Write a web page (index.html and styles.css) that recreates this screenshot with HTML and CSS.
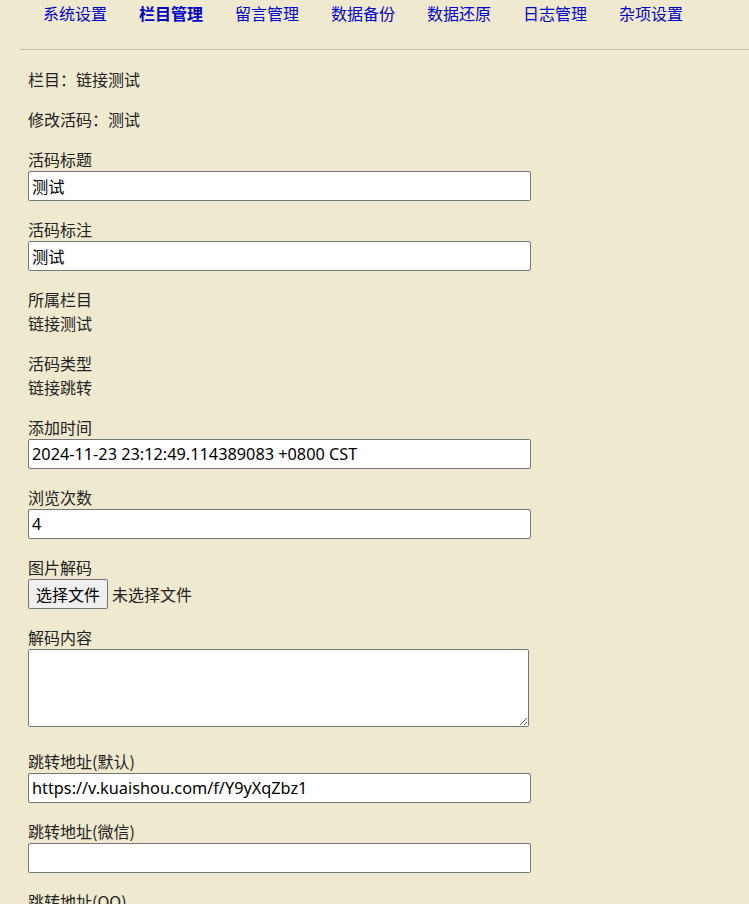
FILE: index.html
```html
<!DOCTYPE html>
<html lang="zh-CN">
<head>
  <meta charset="UTF-8" />
  <title>栏目管理 - 修改活码</title>
  <link rel="stylesheet" href="styles.css">
</head>
<body>

<nav class="topnav">
  <a href="#">系统设置</a>
  <a href="#" class="active">栏目管理</a>
  <a href="#">留言管理</a>
  <a href="#">数据备份</a>
  <a href="#">数据还原</a>
  <a href="#">日志管理</a>
  <a href="#">杂项设置</a>
</nav>
<hr class="divider">

<main class="content">
  <p class="info">栏目：链接测试</p>
  <p class="info">修改活码：测试</p>

  <form class="edit-form">
    <div class="field">
      <label>活码标题</label>
      <input type="text" value="测试">
    </div>
    <div class="field">
      <label>活码标注</label>
      <input type="text" value="测试">
    </div>
    <div class="field">
      <label>所属栏目</label>
      <div class="value">链接测试</div>
    </div>
    <div class="field">
      <label>活码类型</label>
      <div class="value">链接跳转</div>
    </div>
    <div class="field">
      <label>添加时间</label>
      <input type="text" value="2024-11-23 23:12:49.114389083 +0800 CST">
    </div>
    <div class="field">
      <label>浏览次数</label>
      <input type="text" value="4">
    </div>
    <div class="field">
      <label>图片解码</label>
      <div class="file-row">
        <button type="button" class="file-btn">选择文件</button>
        <span class="file-name">未选择文件</span>
      </div>
    </div>
    <div class="field field-area">
      <label>解码内容</label>
      <textarea></textarea>
    </div>
    <div class="field">
      <label>跳转地址(默认)</label>
      <input type="text" value="https://v.kuaishou.com/f/Y9yXqZbz1">
    </div>
    <div class="field">
      <label>跳转地址(微信)</label>
      <input type="text" value="">
    </div>
    <div class="field">
      <label>跳转地址(QQ)</label>
      <input type="text" value="">
    </div>
  </form>
</main>

</body>
</html>
```

FILE: styles.css
```css
body {
  margin: 0;
  background: #efe9cf;
  color: #222;
  font-family: "Noto Sans CJK SC", "Noto Sans", sans-serif;
  font-size: 16px;
  line-height: 24px;
}

.topnav {
  display: flex;
  gap: 32px;
  padding: 1px 0 0 43px;
  height: 24px;
}
.topnav a {
  color: #0000cc;
  text-decoration: none;
  font-size: 16px;
  line-height: 24px;
}
.topnav a.active {
  font-weight: bold;
}

.divider {
  margin: 24px 0 0 20px;
  border: none;
  border-top: 1px solid #c2bea6;
  height: 0;
}

.content {
  padding: 17px 28px 0;
}

.info {
  margin: 0 0 16px;
}

.field {
  margin-bottom: 16px;
}
.field label {
  display: block;
}
.field input[type="text"] {
  display: block;
  box-sizing: border-box;
  width: 503px;
  height: 30px;
  margin: 0;
  padding: 0 3px;
  border: 1px solid #767676;
  border-radius: 2px;
  background: #fff;
  color: #000;
  font-family: "Noto Sans", "Noto Sans CJK SC", sans-serif;
  font-size: 16.3px;
}

.file-row {
  display: flex;
  align-items: center;
  gap: 4px;
  height: 30px;
}
.file-btn {
  box-sizing: border-box;
  height: 30px;
  padding: 0 7px;
  border: 1px solid #767676;
  border-radius: 2px;
  background: #efefef;
  color: #000;
  font-family: inherit;
  font-size: 16px;
}

.field-area {
  margin-bottom: 22px;
}
.field textarea {
  display: block;
  box-sizing: border-box;
  width: 501px;
  height: 78px;
  margin: 0;
  border: 1px solid #767676;
  border-radius: 2px;
  background: #fff;
}
```
